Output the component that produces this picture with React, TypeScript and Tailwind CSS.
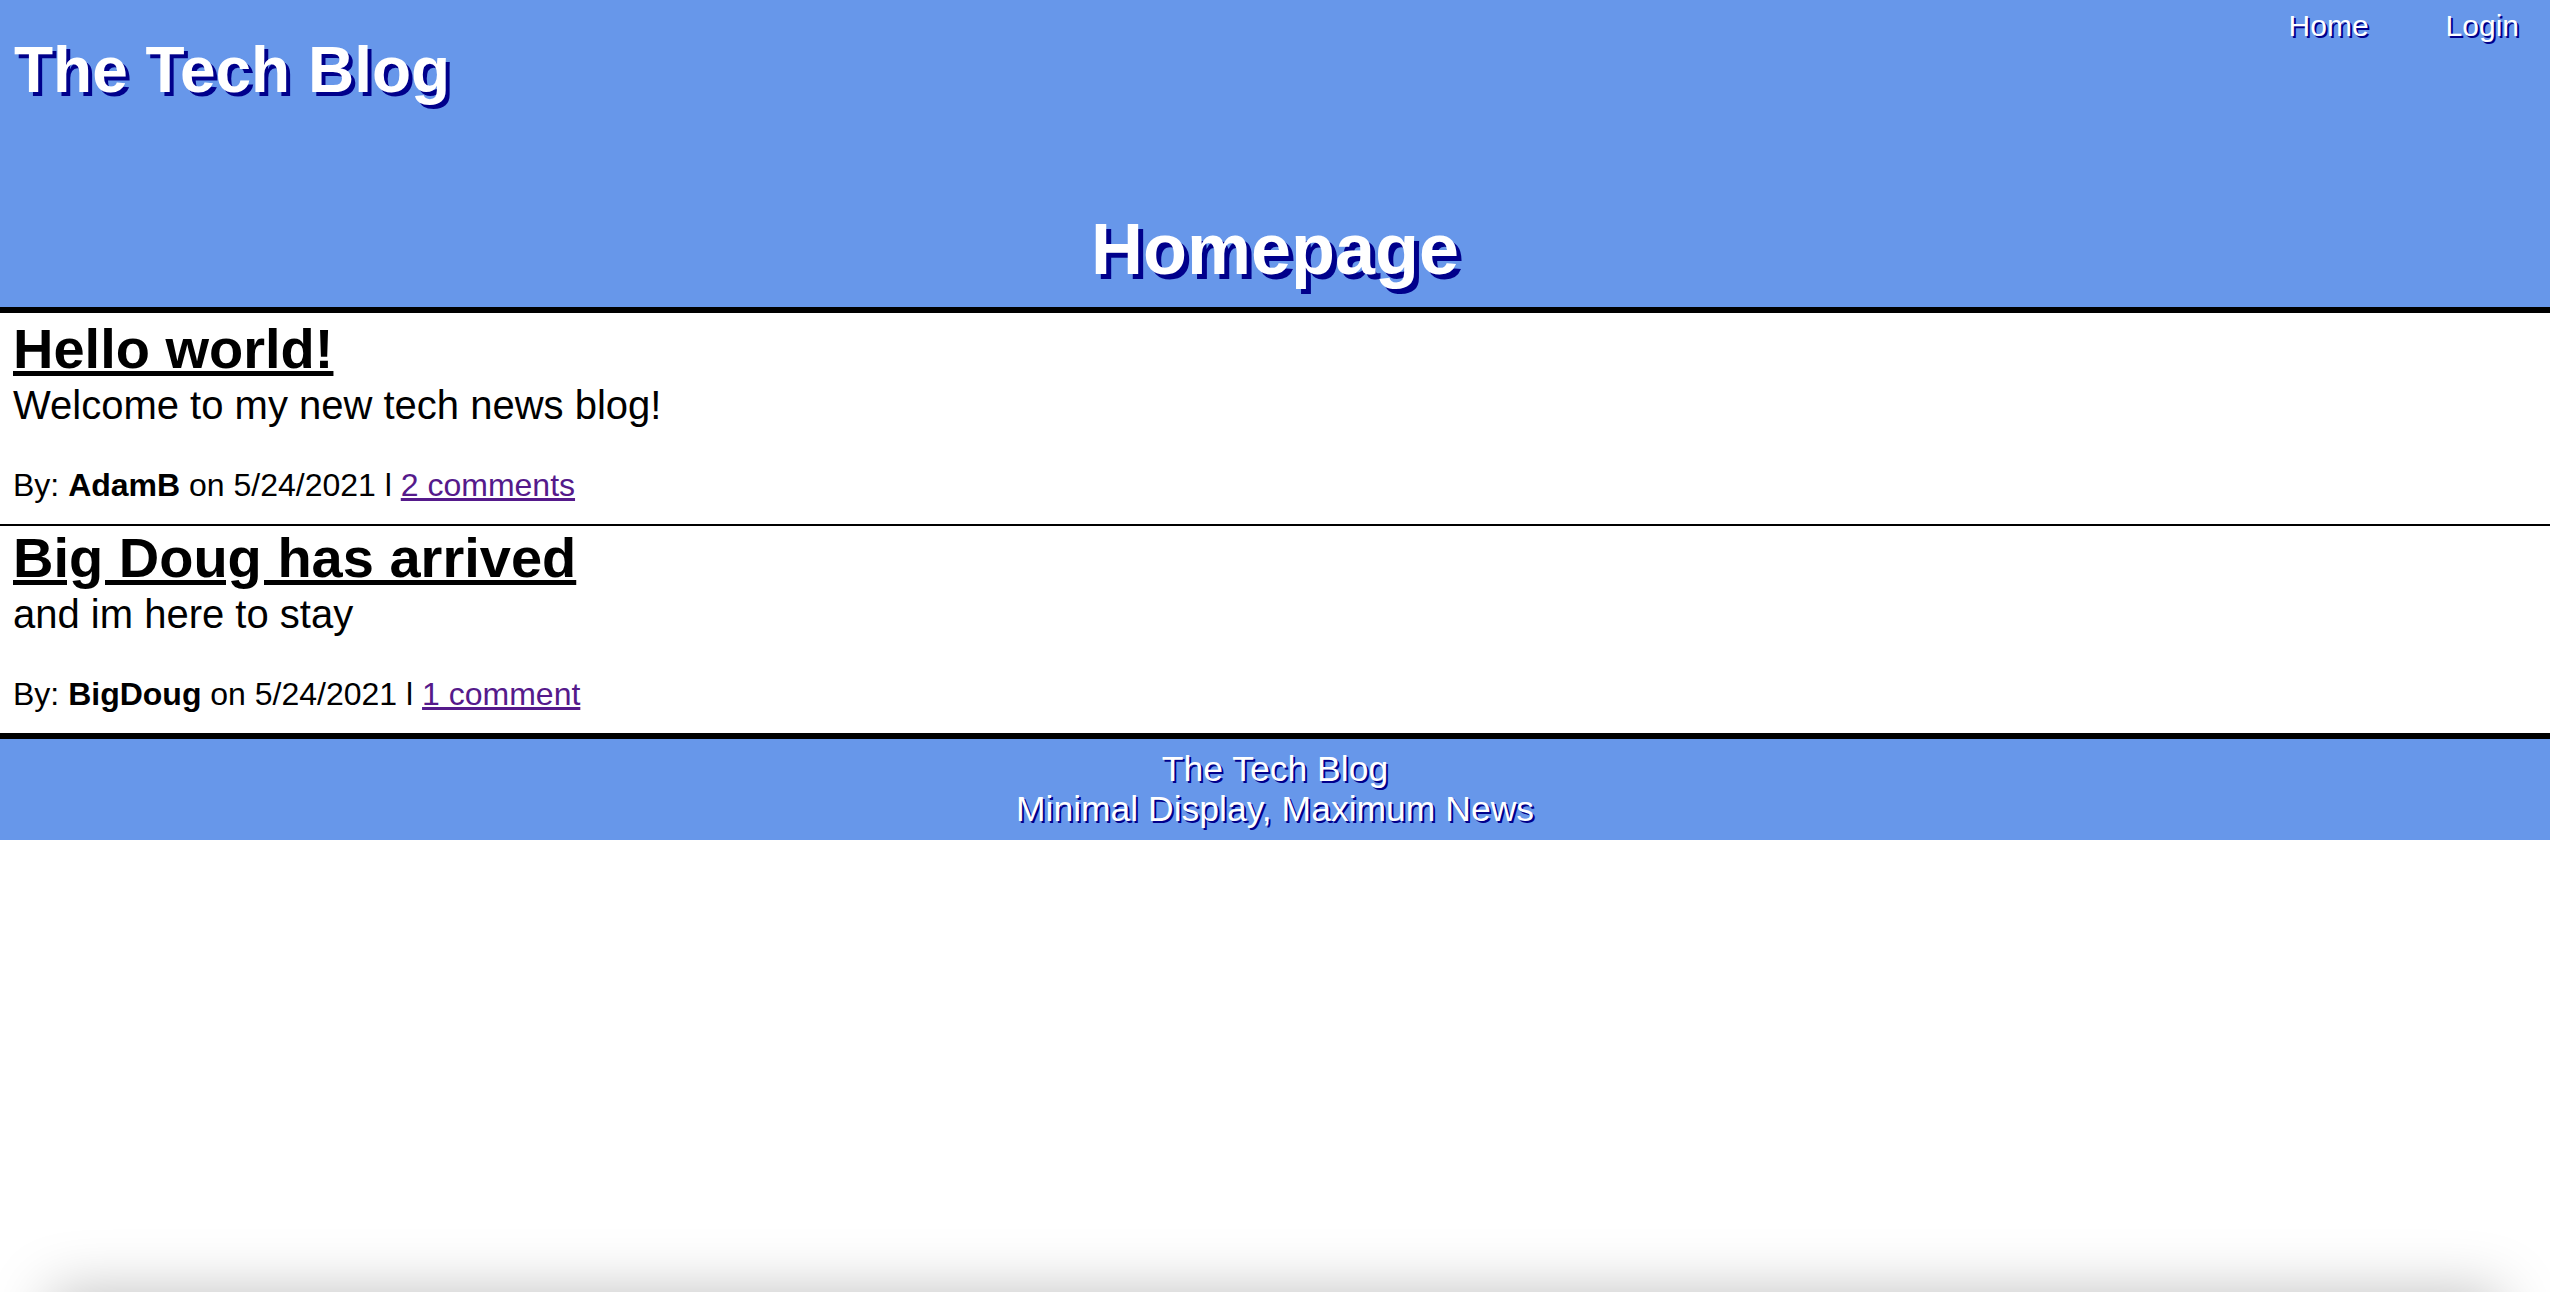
interface Post {
  id: number;
  title: string;
  body: string;
  author: string;
  date: string;
  comments: string;
}

const posts: Post[] = [
  {
    id: 1,
    title: 'Hello world!',
    body: 'Welcome to my new tech news blog!',
    author: 'AdamB',
    date: '5/24/2021',
    comments: '2 comments',
  },
  {
    id: 2,
    title: 'Big Doug has arrived',
    body: 'and im here to stay',
    author: 'BigDoug',
    date: '5/24/2021',
    comments: '1 comment',
  },
];

function PostItem({ post, first }: { post: Post; first: boolean }) {
  return (
    <article className={`pl-[13px] pb-[19px] border-b-2 border-black ${first ? 'pt-[4px]' : ''}`}>
      <h2 className="text-[56px] leading-[1.15] font-bold">
        <a href="#" className="text-black underline">
          {post.title}
        </a>
      </h2>
      <p className="text-[40px] leading-[48px]">{post.body}</p>
      <p className="text-[32px] leading-[1.2] mt-[37px]">
        By: <span className="font-bold">{post.author}</span> on {post.date} l{' '}
        <a href="#" className="text-[#551a8b] underline">
          {post.comments}
        </a>
      </p>
    </article>
  );
}

export default function App() {
  return (
    <div className="min-h-[1292px] bg-white text-black font-['Liberation_Sans',Arial,sans-serif]">
      <header className="bg-[#6797ea] border-b-[6px] border-black text-white">
        <div className="flex items-start justify-between">
          <h1 className="pl-[14px] mt-[34px] text-[64px] leading-[1.13] font-bold [text-shadow:4px_4px_0_#00008b]">
            The Tech Blog
          </h1>
          <nav className="flex gap-[77px] pr-[31px] mt-[9px] text-[30px] leading-[1.15] [text-shadow:2px_2px_0_#00008b]">
            <a href="#">Home</a>
            <a href="#">Login</a>
          </nav>
        </div>
        <h2 className="mt-[103px] pb-[17px] text-center text-[72px] leading-[1.12] font-bold [text-shadow:5px_5px_0_#00008b]">
          Homepage
        </h2>
      </header>

      <main>
        {posts.map((post, i) => (
          <PostItem key={post.id} post={post} first={i === 0} />
        ))}
      </main>

      <footer className="bg-[#6797ea] border-t-[4px] border-black text-white text-center text-[35.5px] leading-[40px] pt-[10px] pb-[11px] [text-shadow:2px_2px_0_#00008b]">
        <p>The Tech Blog</p>
        <p>Minimal Display, Maximum News</p>
      </footer>

      <div className="fixed left-[50px] right-[50px] top-full h-[100px] shadow-[0_0_60px_rgba(0,0,0,0.25)]" />
    </div>
  );
}
